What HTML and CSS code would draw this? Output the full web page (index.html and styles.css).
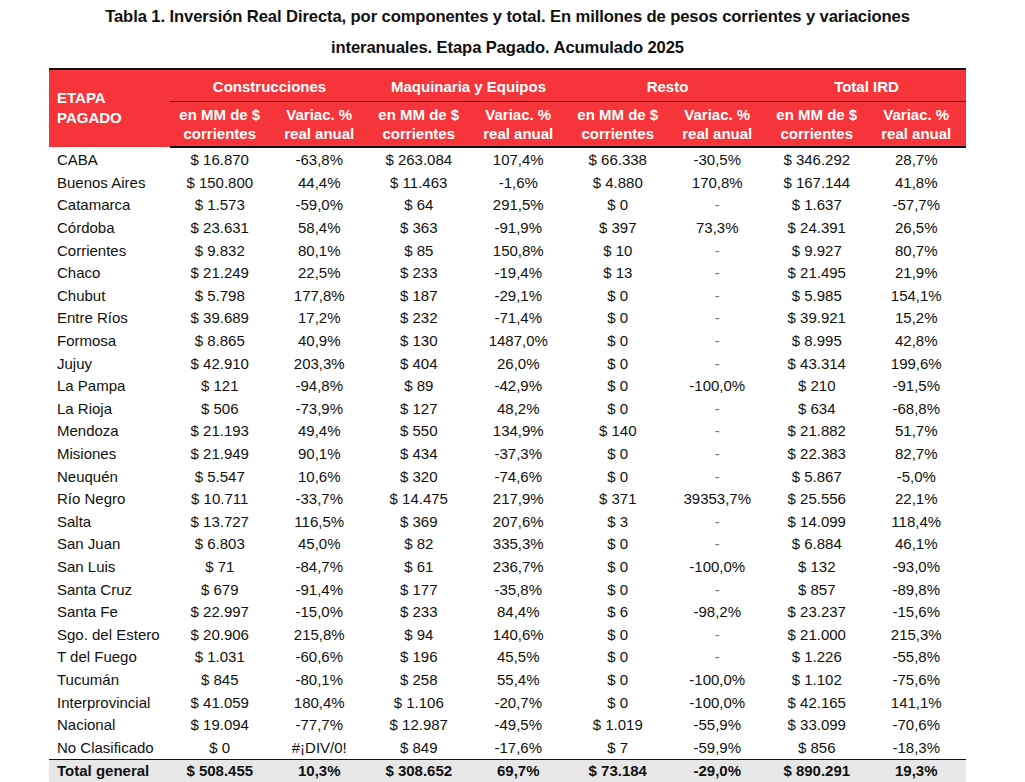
FILE: index.html
```html
<!DOCTYPE html>
<html lang="es">
<head>
<meta charset="utf-8">
<title>Tabla 1</title>
<link rel="stylesheet" href="styles.css">
</head>
<body>
<div class="wrap">
  <h1 class="title">Tabla 1. Inversión Real Directa, por componentes y total. En millones de pesos corrientes y variaciones<br>interanuales. Etapa Pagado. Acumulado 2025</h1>
  <table class="ird">
    <colgroup>
      <col class="c-label">
      <col><col><col><col><col><col><col><col>
    </colgroup>
    <thead>
      <tr class="h1">
        <th rowspan="2" class="h-label">ETAPA<br>PAGADO</th>
        <th colspan="2" class="grp">Construcciones</th>
        <th colspan="2" class="grp">Maquinaria y Equipos</th>
        <th colspan="2" class="grp">Resto</th>
        <th colspan="2" class="grp">Total IRD</th>
      </tr>
      <tr class="h2">
        <th>en MM de $<br>corrientes</th><th>Variac. %<br>real anual</th>
        <th>en MM de $<br>corrientes</th><th>Variac. %<br>real anual</th>
        <th>en MM de $<br>corrientes</th><th>Variac. %<br>real anual</th>
        <th>en MM de $<br>corrientes</th><th>Variac. %<br>real anual</th>
      </tr>
    </thead>
    <tbody>
      <tr><td>CABA</td><td>$ 16.870</td><td>-63,8%</td><td>$ 263.084</td><td>107,4%</td><td>$ 66.338</td><td>-30,5%</td><td>$ 346.292</td><td>28,7%</td></tr>
      <tr><td>Buenos Aires</td><td>$ 150.800</td><td>44,4%</td><td>$ 11.463</td><td>-1,6%</td><td>$ 4.880</td><td>170,8%</td><td>$ 167.144</td><td>41,8%</td></tr>
      <tr><td>Catamarca</td><td>$ 1.573</td><td>-59,0%</td><td>$ 64</td><td>291,5%</td><td>$ 0</td><td class="dash">-</td><td>$ 1.637</td><td>-57,7%</td></tr>
      <tr><td>Córdoba</td><td>$ 23.631</td><td>58,4%</td><td>$ 363</td><td>-91,9%</td><td>$ 397</td><td>73,3%</td><td>$ 24.391</td><td>26,5%</td></tr>
      <tr><td>Corrientes</td><td>$ 9.832</td><td>80,1%</td><td>$ 85</td><td>150,8%</td><td>$ 10</td><td class="dash">-</td><td>$ 9.927</td><td>80,7%</td></tr>
      <tr><td>Chaco</td><td>$ 21.249</td><td>22,5%</td><td>$ 233</td><td>-19,4%</td><td>$ 13</td><td class="dash">-</td><td>$ 21.495</td><td>21,9%</td></tr>
      <tr><td>Chubut</td><td>$ 5.798</td><td>177,8%</td><td>$ 187</td><td>-29,1%</td><td>$ 0</td><td class="dash">-</td><td>$ 5.985</td><td>154,1%</td></tr>
      <tr><td>Entre Ríos</td><td>$ 39.689</td><td>17,2%</td><td>$ 232</td><td>-71,4%</td><td>$ 0</td><td class="dash">-</td><td>$ 39.921</td><td>15,2%</td></tr>
      <tr><td>Formosa</td><td>$ 8.865</td><td>40,9%</td><td>$ 130</td><td>1487,0%</td><td>$ 0</td><td class="dash">-</td><td>$ 8.995</td><td>42,8%</td></tr>
      <tr><td>Jujuy</td><td>$ 42.910</td><td>203,3%</td><td>$ 404</td><td>26,0%</td><td>$ 0</td><td class="dash">-</td><td>$ 43.314</td><td>199,6%</td></tr>
      <tr><td>La Pampa</td><td>$ 121</td><td>-94,8%</td><td>$ 89</td><td>-42,9%</td><td>$ 0</td><td>-100,0%</td><td>$ 210</td><td>-91,5%</td></tr>
      <tr><td>La Rioja</td><td>$ 506</td><td>-73,9%</td><td>$ 127</td><td>48,2%</td><td>$ 0</td><td class="dash">-</td><td>$ 634</td><td>-68,8%</td></tr>
      <tr><td>Mendoza</td><td>$ 21.193</td><td>49,4%</td><td>$ 550</td><td>134,9%</td><td>$ 140</td><td class="dash">-</td><td>$ 21.882</td><td>51,7%</td></tr>
      <tr><td>Misiones</td><td>$ 21.949</td><td>90,1%</td><td>$ 434</td><td>-37,3%</td><td>$ 0</td><td class="dash">-</td><td>$ 22.383</td><td>82,7%</td></tr>
      <tr><td>Neuquén</td><td>$ 5.547</td><td>10,6%</td><td>$ 320</td><td>-74,6%</td><td>$ 0</td><td class="dash">-</td><td>$ 5.867</td><td>-5,0%</td></tr>
      <tr><td>Río Negro</td><td>$ 10.711</td><td>-33,7%</td><td>$ 14.475</td><td>217,9%</td><td>$ 371</td><td>39353,7%</td><td>$ 25.556</td><td>22,1%</td></tr>
      <tr><td>Salta</td><td>$ 13.727</td><td>116,5%</td><td>$ 369</td><td>207,6%</td><td>$ 3</td><td class="dash">-</td><td>$ 14.099</td><td>118,4%</td></tr>
      <tr><td>San Juan</td><td>$ 6.803</td><td>45,0%</td><td>$ 82</td><td>335,3%</td><td>$ 0</td><td class="dash">-</td><td>$ 6.884</td><td>46,1%</td></tr>
      <tr><td>San Luis</td><td>$ 71</td><td>-84,7%</td><td>$ 61</td><td>236,7%</td><td>$ 0</td><td>-100,0%</td><td>$ 132</td><td>-93,0%</td></tr>
      <tr><td>Santa Cruz</td><td>$ 679</td><td>-91,4%</td><td>$ 177</td><td>-35,8%</td><td>$ 0</td><td class="dash">-</td><td>$ 857</td><td>-89,8%</td></tr>
      <tr><td>Santa Fe</td><td>$ 22.997</td><td>-15,0%</td><td>$ 233</td><td>84,4%</td><td>$ 6</td><td>-98,2%</td><td>$ 23.237</td><td>-15,6%</td></tr>
      <tr><td>Sgo. del Estero</td><td>$ 20.906</td><td>215,8%</td><td>$ 94</td><td>140,6%</td><td>$ 0</td><td class="dash">-</td><td>$ 21.000</td><td>215,3%</td></tr>
      <tr><td>T del Fuego</td><td>$ 1.031</td><td>-60,6%</td><td>$ 196</td><td>45,5%</td><td>$ 0</td><td class="dash">-</td><td>$ 1.226</td><td>-55,8%</td></tr>
      <tr><td>Tucumán</td><td>$ 845</td><td>-80,1%</td><td>$ 258</td><td>55,4%</td><td>$ 0</td><td>-100,0%</td><td>$ 1.102</td><td>-75,6%</td></tr>
      <tr><td>Interprovincial</td><td>$ 41.059</td><td>180,4%</td><td>$ 1.106</td><td>-20,7%</td><td>$ 0</td><td>-100,0%</td><td>$ 42.165</td><td>141,1%</td></tr>
      <tr><td>Nacional</td><td>$ 19.094</td><td>-77,7%</td><td>$ 12.987</td><td>-49,5%</td><td>$ 1.019</td><td>-55,9%</td><td>$ 33.099</td><td>-70,6%</td></tr>
      <tr><td>No Clasificado</td><td>$ 0</td><td>#¡DIV/0!</td><td>$ 849</td><td>-17,6%</td><td>$ 7</td><td>-59,9%</td><td>$ 856</td><td>-18,3%</td></tr>
    </tbody>
    <tfoot>
      <tr><td>Total general</td><td>$ 508.455</td><td>10,3%</td><td>$ 308.652</td><td>69,7%</td><td>$ 73.184</td><td>-29,0%</td><td>$ 890.291</td><td>19,3%</td></tr>
    </tfoot>
  </table>
</div>
</body>
</html>
```

FILE: styles.css
```css
html, body {
  margin: 0;
  padding: 0;
  background: #ffffff;
}

body {
  font-family: "Liberation Sans", Arial, sans-serif;
  color: #111111;
}

.wrap {
  width: 917px;
  margin-left: 49px;
}

.title {
  margin: 0;
  padding-top: 1px;
  height: 67px;
  font-size: 16.6px;
  font-weight: bold;
  line-height: 31px;
  text-align: center;
  letter-spacing: -0.1px;
  color: #111111;
  white-space: nowrap;
}

.ird {
  width: 917px;
  table-layout: fixed;
  border-collapse: collapse;
  font-size: 15px;
}

.c-label {
  width: 121px;
}

.ird thead {
  background: #f6353b;
  color: #ffffff;
}

.ird thead th {
  font-weight: bold;
  padding: 0;
  text-align: center;
  line-height: 19px;
}

.ird thead tr.h1 {
  border-top: 2px solid #111111;
}

.ird thead tr.h1 th.grp {
  height: 30px;
  border-bottom: 1px solid #111111;
  vertical-align: middle;
  padding-top: 1px;
}

.ird thead .h-label {
  text-align: left;
  padding-left: 8px;
  padding-bottom: 2px;
  vertical-align: middle;
  line-height: 20px;
}

.ird thead tr.h2 th {
  height: 44px;
  border-bottom: 2px solid #111111;
  line-height: 19px;
  vertical-align: middle;
}

.ird tbody td,
.ird tfoot td {
  padding: 0;
  text-align: center;
  height: 22.6px;
  line-height: 20px;
  white-space: nowrap;
}

.ird tbody td:first-child,
.ird tfoot td:first-child {
  text-align: left;
  padding-left: 8px;
}

.ird tbody tr:first-child td {
  padding-top: 1px;
}

.ird td.dash {
  color: #777777;
}

.ird tfoot tr {
  background: #e7e7e7;
  border-top: 1px solid #111111;
  border-bottom: 2px solid #111111;
}

.ird tfoot td {
  height: 22px;
  font-weight: bold;
  padding-top: 0;
}
```
